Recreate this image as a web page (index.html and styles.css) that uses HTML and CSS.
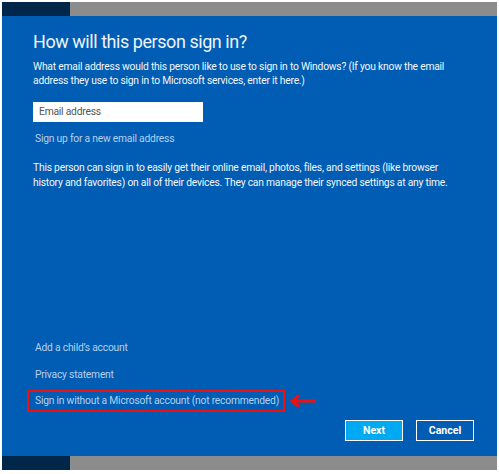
FILE: index.html
```html
<!DOCTYPE html>
<html>
<head>
<meta charset="utf-8">
<link rel="stylesheet" href="styles.css">
</head>
<body>
<div class="frame">
  <div class="bar">
    <div class="bar-dark"></div>
    <div class="bar-gray"></div>
  </div>
  <div class="main">
    <h1 class="title">How will this person sign in?</h1>
    <p class="text intro">What email address would this person like to use to sign in to Windows? (If you know the email<br>address they use to sign in to Microsoft services, enter it here.)</p>
    <div class="input">Email address</div>
    <div class="link signup">Sign up for a new email address</div>
    <p class="text desc">This person can sign in to easily get their online email, photos, files, and settings (like browser<br>history and favorites) on all of their devices. They can manage their synced settings at any time.</p>
    <div class="bottom">
      <div class="link">Add a child’s account</div>
      <div class="link privacy">Privacy statement</div>
      <div class="highlight-row">
        <div class="highlight"><span class="link">Sign in without a Microsoft account (not recommended)</span></div>
        <svg class="arrow" width="28" height="14" viewBox="0 0 28 14"><path d="M27 7H4M10 1.5L3 7l7 5.5" fill="none" stroke="#f01010" stroke-width="3"/></svg>
      </div>
      <div class="buttons">
        <div class="btn next">Next</div>
        <div class="btn cancel">Cancel</div>
      </div>
    </div>
  </div>
  <div class="bar">
    <div class="bar-dark"></div>
    <div class="bar-gray"></div>
  </div>
</div>
</body>
</html>
```

FILE: styles.css
```css
html, body {
  margin: 0;
  padding: 0;
  background: #ffffff;
}
.frame {
  padding: 2px 2px 1px 2px;
  width: 495px;
  font-family: Roboto, "Noto Sans", sans-serif;
}
.bar {
  display: flex;
  height: 14px;
}
.bar-dark {
  width: 68px;
  background: #00264a;
}
.bar-gray {
  flex: 1;
  background: #8c8c8c;
}
.main {
  background: #005db3;
  height: 440px;
  display: flex;
  flex-direction: column;
  padding: 0 0 0 31px;
  box-sizing: border-box;
  color: #ffffff;
}
.title {
  margin: 14px 0 0 0;
  font-weight: 400;
  font-size: 18px;
  letter-spacing: -0.45px;
  line-height: 24px;
  color: #eef3fa;
  white-space: nowrap;
}
.text {
  margin: 0;
  font-size: 10.3px;
  letter-spacing: -0.22px;
  line-height: 14px;
  color: #f2f6fb;
  white-space: nowrap;
}
.intro {
  margin-top: 6px;
}
.input {
  margin-top: 14px;
  width: 170px;
  height: 20px;
  background: #ffffff;
  color: #555555;
  font-size: 10.3px;
  letter-spacing: -0.22px;
  line-height: 20px;
  padding-left: 6px;
  box-sizing: border-box;
}
.link {
  font-size: 10.3px;
  letter-spacing: -0.22px;
  line-height: 14px;
  color: #b4d0ee;
  white-space: nowrap;
}
.signup {
  margin-top: 10px;
  margin-left: 2px;
}
.desc {
  margin-top: 14px;
  line-height: 15px;
}
.bottom {
  margin-top: auto;
  display: flex;
  flex-direction: column;
  padding-bottom: 15px;
}
.bottom > .link {
  margin-left: 2px;
}
.privacy {
  margin-top: 13px;
}
.highlight-row {
  display: flex;
  align-items: center;
  margin-top: 8px;
  margin-left: -6px;
}
.highlight {
  border: 2px solid #f01010;
  height: 22px;
  padding: 0 0 0 6px;
  width: 258px;
  box-sizing: border-box;
  display: flex;
  align-items: center;
}
.arrow {
  margin-left: 4px;
}
.buttons {
  display: flex;
  justify-content: flex-end;
  gap: 13px;
  margin-top: 8px;
  padding-right: 23px;
}
.btn {
  width: 58px;
  height: 21px;
  box-sizing: border-box;
  border: 1px solid #ffffff;
  font-size: 10.6px;
  font-weight: 700;
  line-height: 19px;
  text-align: center;
  color: #ffffff;
}
.next {
  background: #00aaf2;
}
.cancel {
  background: #005db3;
}
```
